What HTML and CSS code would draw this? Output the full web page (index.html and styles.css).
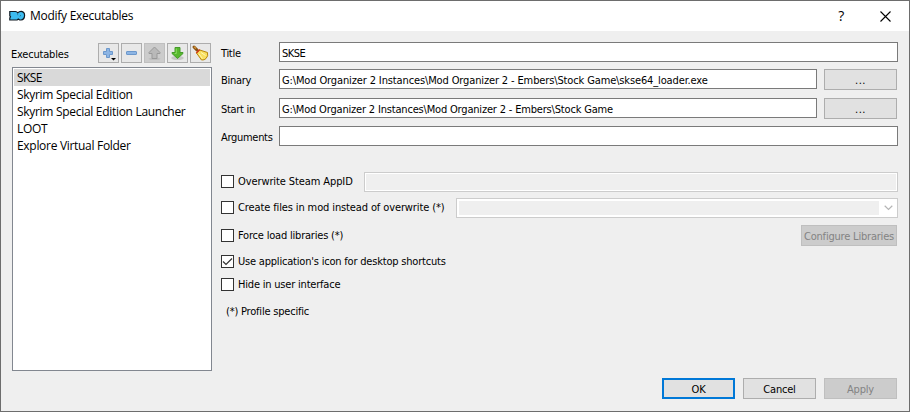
FILE: index.html
```html
<!DOCTYPE html>
<html lang="en">
<head>
<meta charset="utf-8">
<title>Modify Executables</title>
<link rel="stylesheet" href="styles.css">
</head>
<body>
<div class="window">
  <header class="titlebar">
    <svg class="logo" width="17" height="12" viewBox="0 0 17 12"><path d="M.8 1.5H6.4Q8 1.7 8.7 2.8Q10.3 1.2 12.3 1.3Q15.6 1.8 15.6 5.4Q15.4 9.6 12 10H10.7L9.3 9L8.2 10H.8V8L1.5 6.8L.8 5.8Z" fill="#3dbcf0" stroke="#101820" stroke-width="1.2"/><path d="M8.6 4.4L8.9 5.2M10.8 6.2L11.8 5.4" stroke="#204860" stroke-width=".8" fill="none"/></svg>
    <h1 class="caption">Modify Executables</h1>
    <span class="help">?</span>
    <svg class="close" width="11" height="11" viewBox="0 0 11 11"><path d="M.5 .5L10.5 10.5M10.5 .5L.5 10.5" stroke="#000" stroke-width="1.1"/></svg>
  </header>
  <main class="content">
    <section class="side">
      <div class="tools">
        <span class="tools-label">Executables</span>
        <button class="tool"><svg width="19" height="18" viewBox="0 0 19 18"><path d="M7.5 4.5h3v3h3v3h-3v3h-3v-3h-3v-3h3z" fill="#8db5e4" stroke="#6c98cc"/><path d="M12 14h5L14.5 16.5z" fill="#000"/></svg></button>
        <button class="tool"><svg width="19" height="18" viewBox="0 0 19 18"><rect x="4.5" y="7.5" width="10" height="3" rx=".5" fill="#8db5e4" stroke="#6c98cc"/></svg></button>
        <button class="tool off"><svg width="19" height="18" viewBox="0 0 19 18"><ellipse cx="9.5" cy="14.8" rx="6" ry="1.3" fill="#bdbdbd"/><path d="M9.5 3L15 8.5V9.5H12V14.5H7V9.5H4V8.5Z" fill="#b9b9b9" stroke="#999"/></svg></button>
        <button class="tool"><svg width="19" height="18" viewBox="0 0 19 18"><ellipse cx="9.5" cy="14" rx="6.3" ry="2" fill="#c6c6c4"/><path d="M7 3.5H12V8.5H15V9.5L9.5 14.5L4 9.5V8.5H7Z" fill="#57b82e" stroke="#469b2b"/><path d="M8.3 4.5V9.5H6.7" fill="none" stroke="#8bdc60"/></svg></button>
        <button class="tool"><svg width="19" height="18" viewBox="0 0 19 18"><path d="M3 3L6 6" stroke="#885014" stroke-width="3" stroke-linecap="round"/><path d="M3 2.8L5 4.6" stroke="#d79a38" stroke-width="1.3"/><path d="M8.8 6L16.5 8.5Q17.5 12 15 14.5Q13.5 16.3 10.5 16L5.5 9Z" fill="#f9e060" stroke="#b8860b"/><path d="M5.3 9L8.7 5.5" stroke="#d33716" stroke-width="1.5"/><path d="M8 10L11.5 14.5M10 8.5L14.5 11.5" stroke="#fff6b8"/></svg></button>
      </div>
      <ul class="list">
        <li class="selected">SKSE</li>
        <li>Skyrim Special Edition</li>
        <li>Skyrim Special Edition Launcher</li>
        <li>LOOT</li>
        <li>Explore Virtual Folder</li>
      </ul>
    </section>
    <section class="details">
      <div class="row title-row"><label>Title</label><div class="field">SKSE</div></div>
      <div class="row binary-row"><label>Binary</label><div class="field path">G:\Mod Organizer 2 Instances\Mod Organizer 2 - Embers\Stock Game\skse64_loader.exe</div><button class="button browse">...</button></div>
      <div class="row start-row"><label>Start in</label><div class="field path">G:\Mod Organizer 2 Instances\Mod Organizer 2 - Embers\Stock Game</div><button class="button browse">...</button></div>
      <div class="row args-row"><label>Arguments</label><div class="field"></div></div>
      <div class="option steam"><i class="check"></i><span class="option-label">Overwrite Steam AppID</span><div class="field disabled"></div></div>
      <div class="option create"><i class="check"></i><span class="option-label">Create files in mod instead of overwrite (*)</span><div class="field disabled combo"><svg width="9" height="6" viewBox="0 0 9 6"><path d="M.7 .8L4.5 4.5L8.3 .8" fill="none" stroke="#b5b5b5" stroke-width="1.2"/></svg></div></div>
      <div class="option force"><i class="check"></i><span class="option-label">Force load libraries (*)</span><button class="button off configure">Configure Libraries</button></div>
      <div class="option icon"><i class="check"><svg width="11" height="11" viewBox="0 0 11 11"><path d="M1 5.5L4 8.5L10 2.5" fill="none" stroke="#333" stroke-width="1.2"/></svg></i><span class="option-label">Use application's icon for desktop shortcuts</span></div>
      <div class="option hide"><i class="check"></i><span class="option-label">Hide in user interface</span></div>
      <p class="note">(*) Profile specific</p>
    </section>
  </main>
  <footer class="actions">
    <button class="button primary">OK</button>
    <button class="button">Cancel</button>
    <button class="button off">Apply</button>
  </footer>
</div>
</body>
</html>
```
FILE: styles.css
```css
* { box-sizing: border-box; }
body { margin: 0; }
.window {
  width: 910px; height: 412px; border: 1px solid #6d6d6d; background: #efefef;
  color: #000; display: flex; flex-direction: column; overflow: hidden;
  font: 11px/14px "DejaVu Sans", sans-serif; font-stretch: condensed; letter-spacing: -.2px;
}
.titlebar { height: 30px; background: #fff; display: flex; align-items: center; padding: 0 18px 0 8px; flex: none; }
.caption { margin: 0 0 0 4px; font: 12px/16px "Open Sans", sans-serif; letter-spacing: -.27px; flex: 1; }
.help { font: 14px/16px "Open Sans", sans-serif; margin-right: 36px; }
.content { display: flex; height: 340px; flex: none; }
.side { width: 211px; padding: 12px 0 0 11px; flex: none; }
.tools { display: flex; gap: 2px; height: 20px; }
.tools-label { width: 84px; line-height: 24px; margin-left: -1px; margin-right: 1px; }
.tool { width: 21px; height: 20px; border: 1px solid #adadad; background: #e8e8e8; padding: 0; flex: none; }
.tool svg { display: block; }
.tool.off { background: #ccc; border-color: #bfbfbf; }
.list { list-style: none; margin: 4px 0 0; padding: 1px; width: 200px; height: 304px; border: 1px solid #828790; background: #fff; font: 12px/18px "Open Sans", sans-serif; letter-spacing: -.3px; }
.list li { height: 17px; padding-left: 3px; white-space: nowrap; }
.list .selected { background: #d9d9d9; letter-spacing: -.6px; }
.details { flex: 1; padding: 11px 11px 0 9px; display: flex; flex-direction: column; }
.row { display: flex; height: 20px; flex: none; }
.row label { width: 58px; line-height: 24px; white-space: nowrap; letter-spacing: -.3px; }
.field { flex: 1; height: 20px; border: 1px solid #7a7a7a; background: #fff; padding-left: 2px; line-height: 21px; white-space: pre; }
.title-row .field { letter-spacing: -.5px; }
.binary-row { margin-top: 7px; }
.binary-row .field { letter-spacing: -.13px; }
.start-row { margin-top: 9px; }
.start-row .field { letter-spacing: -.18px; }
.args-row { margin-top: 8px; }
.button { width: 73px; height: 21px; border: 1px solid #adadad; background: #e1e1e1; padding: 0; font: inherit; letter-spacing: inherit; color: #000; line-height: 21px; flex: none; }
.button.off { border-color: #bfbfbf; background: #ccc; color: #838383; }
.button.primary { border: 2px solid #0078d7; line-height: 19px; }
.browse { margin: 0 1px 0 7px; letter-spacing: .5px; }
.option { display: flex; height: 21px; align-items: center; flex: none; }
.check { width: 13px; height: 13px; border: 1px solid #333; background: #fff; flex: none; }
.check svg { display: block; }
.option-label { margin-left: 4px; white-space: nowrap; flex: none; line-height: 16px; }
.field.disabled { border-color: #ccc; background: #efefef; box-shadow: inset 0 0 0 1px #fff; }
.steam { height: 20px; margin-top: 26px; }
.steam .check, .create .check { margin-bottom: 1px; }
.steam .option-label { width: 126px; letter-spacing: -.1px; }
.create { height: 20px; margin-top: 6px; }
.create .option-label { width: 218px; letter-spacing: -.12px; }
.field.combo { display: flex; align-items: center; justify-content: flex-end; padding-right: 4px; background: linear-gradient(90deg, #efefef calc(100% - 18px), #fff calc(100% - 18px)); box-shadow: inset 0 0 0 2px #fff; }
.force { margin-top: 7px; }
.configure { width: 96px; margin: 0 1px 0 auto; }
.icon { margin-top: 5px; }
.hide { margin-top: 2px; }
.note { margin: 10px 0 0 5px; }
.actions { display: flex; gap: 8px; justify-content: flex-end; padding: 7px 12px 0 0; }
```
